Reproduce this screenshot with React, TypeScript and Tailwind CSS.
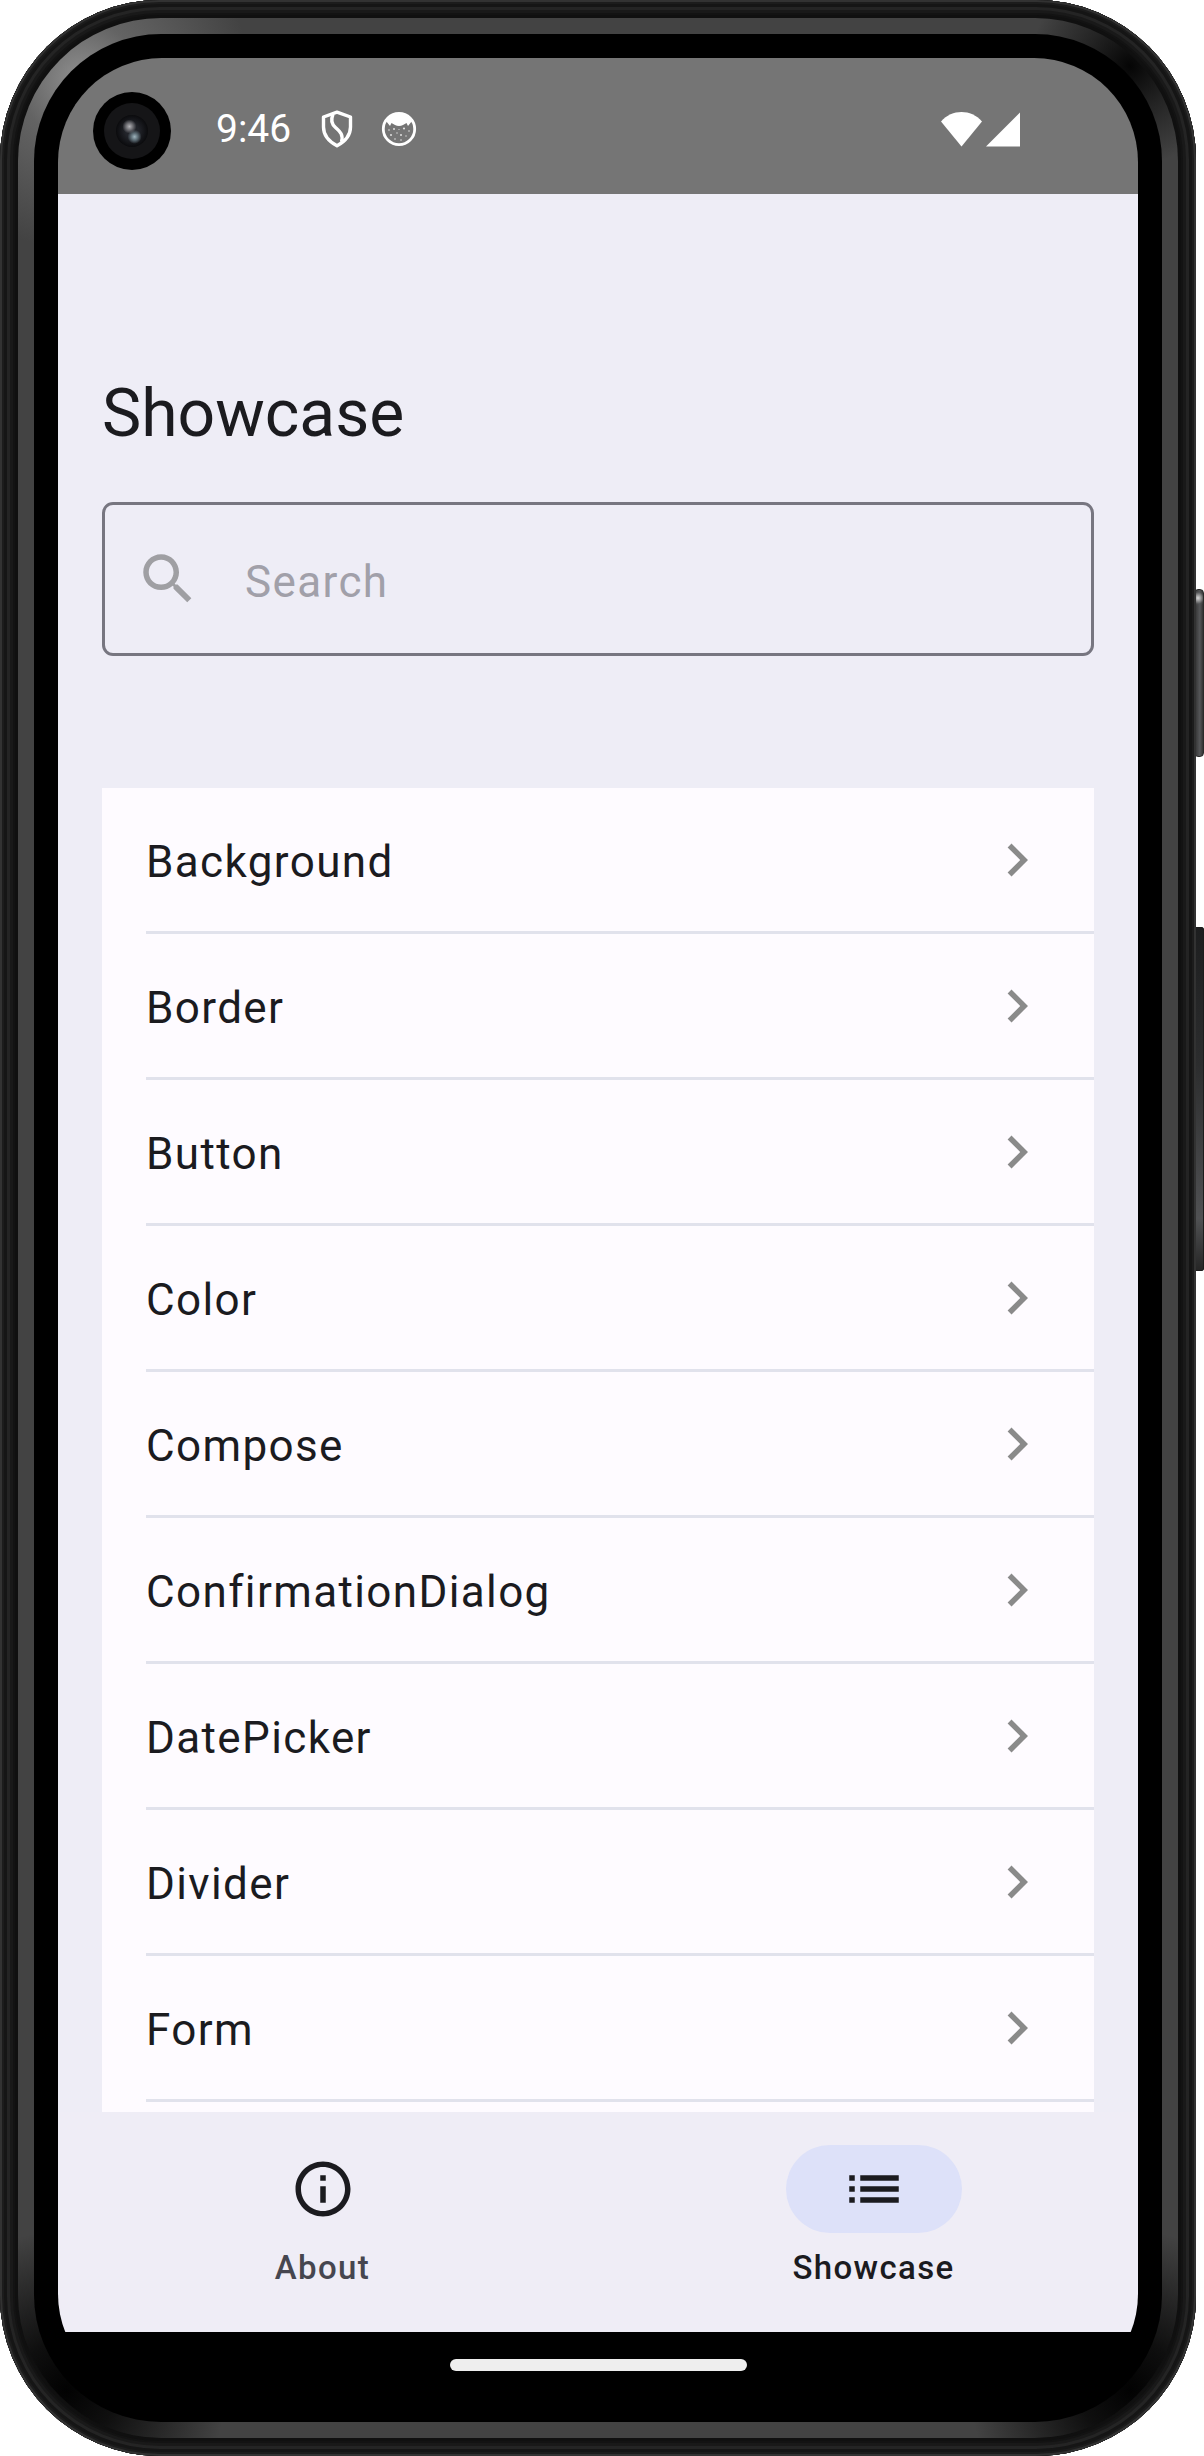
import React from "react";

const ITEMS = [
  "Background",
  "Border",
  "Button",
  "Color",
  "Compose",
  "ConfirmationDialog",
  "DatePicker",
  "Divider",
  "Form",
];

function Camera() {
  return (
    <div className="absolute left-[35px] top-[34px] flex h-[78px] w-[78px] items-center justify-center rounded-full bg-black">
      <div className="flex h-14 w-14 items-center justify-center rounded-full bg-[#151517]">
        <div className="h-8 w-8 rounded-full bg-[radial-gradient(circle_at_42%_36%,#b4b4b8_0px,#77777c_3px,transparent_7px),radial-gradient(circle_at_58%_68%,#9fb4bd_0px,#64757e_3px,transparent_7px),radial-gradient(circle,#22242a_30%,#08080a_75%)]" />
      </div>
    </div>
  );
}

function StatusBar() {
  return (
    <div className="relative flex h-[136px] shrink-0 items-center bg-[#757575] pt-[6px] text-white">
      <Camera />
      <span className="ml-[158px] w-[75px] whitespace-nowrap text-[39px] leading-[46px]">9:46</span>
      <svg className="ml-[30px] h-[38px] w-[32px]" viewBox="0 0 32 38" fill="none" stroke="white" strokeWidth="3.4" strokeLinejoin="round">
        <path d="M16 2.200 L29.500 7 V17 C29.500 25 24 31.500 16 35.800 C8 31.500 2.500 25 2.500 17 V7 Z" />
        <path d="M12 4.500 C9.500 10 10.500 14 14.500 17.500 C19.500 22 22.500 25 20.500 32" />
      </svg>
      <svg className="ml-[28px] h-[36px] w-[36px]" viewBox="0 0 36 36">
        <circle cx="18" cy="18" r="15.700" fill="none" stroke="white" strokeWidth="2.800" />
        <path d="M5 10 C9 4 13 2 18 2 C23 2 27 4 31 10 L27 15 L25.500 12 L22 14 C19.500 15.200 16.500 15.200 14 14 L10.500 12 L9 15 Z" fill="white" />
        <g fill="#e0e0e0">
          <circle cx="8" cy="19" r=".8" /><circle cx="13" cy="18" r="1" /><circle cx="23" cy="17.500" r="1.100" />
          <circle cx="28" cy="20" r=".8" /><circle cx="10" cy="24" r="1" /><circle cx="16" cy="22" r=".7" />
          <circle cx="20" cy="24" r="1" /><circle cx="25" cy="25" r=".7" /><circle cx="14" cy="28" r=".8" />
          <circle cx="20" cy="29" r=".8" /><circle cx="18" cy="18.500" r=".6" />
        </g>
      </svg>
      <svg className="ml-auto h-[35px] w-[41px]" viewBox="0 0 41 35" fill="white">
        <path d="M0 9.500 C11 -3.100 30 -3.100 41 9.500 L20.500 34.500 Z" />
      </svg>
      <svg className="ml-[4px] mr-[118px] h-[35px] w-[34px]" viewBox="0 0 34 35" fill="white">
        <path d="M34 0.500 V34.500 H0 Z" />
      </svg>
    </div>
  );
}

function SearchField() {
  return (
    <div className="mx-11 mt-[33px] flex h-[154px] shrink-0 items-center rounded-[11px] border-[3px] border-[#777680] pl-[30px]">
      <svg className="h-[66px] w-[66px]" viewBox="0 0 24 24" fill="#9f9fa3">
        <path d="M15.500 14h-.79l-.28-.27C15.410 12.590 16 11.110 16 9.500 16 5.910 13.090 3 9.500 3S3 5.910 3 9.500 5.910 16 9.500 16c1.610 0 3.090-.59 4.230-1.570l.27.28v.79l5 4.990L20.490 19l-4.990-5zm-6 0C7.010 14 5 11.990 5 9.500S7.010 5 9.500 5 14 7.010 14 9.500 11.990 14 9.500 14z" />
      </svg>
      <span className="ml-[44px] mt-[5px] text-[44px] leading-[66px] tracking-[1.375px] text-[#a1a0a9]">Search</span>
    </div>
  );
}

function Row({ label }: { label: string }) {
  return (
    <li className="ml-11 flex h-[146px] shrink-0 items-center justify-between border-b-[3px] border-[#e1e2ec] pr-11">
      <span className="mt-[4px] text-[44px] leading-[66px] tracking-[1.375px] text-[#1b1b1f]">{label}</span>
      <svg className="h-[66px] w-[66px]" viewBox="0 0 24 24" fill="#8a8a8a">
        <path d="M10 6L8.590 7.410 13.170 12l-4.580 4.590L10 18l6-6z" />
      </svg>
    </li>
  );
}

function NavItem({ label, active, path }: { label: string; active?: boolean; path: string }) {
  return (
    <div className="flex flex-1 flex-col items-center pt-[33px]">
      <div className={active ? "flex h-[88px] w-[176px] items-center justify-center rounded-full bg-[#dde1f9]" : "flex h-[88px] w-[176px] items-center justify-center"}>
        <svg className="h-[66px] w-[66px]" viewBox="0 0 24 24" fill="#1b1b1f">
          <path d={path} />
        </svg>
      </div>
      <span className={active ? "mt-[13px] text-[33px] font-medium leading-[44px] tracking-[1.375px] text-[#1b1b1f]" : "mt-[13px] text-[33px] font-medium leading-[44px] tracking-[1.375px] text-[#46464f]"}>
        {label}
      </span>
    </div>
  );
}

export default function App() {
  return (
    <div className="relative h-[2456px] w-[1204px] overflow-hidden bg-white font-['Roboto',sans-serif]">
      <div className="absolute left-[1194px] top-[589px] h-[168px] w-[10px] rounded-[4px] border border-[#2a2a2a] bg-[radial-gradient(circle_at_3px_8px,#d8d8d8_0px,#55565866_6px,transparent_8px),linear-gradient(90deg,#333,#555658_60%,#333)]" />
      <div className="absolute left-[1194px] top-[927px] h-[344px] w-[10px] rounded-[2px] border border-[#1c1c1c] bg-[linear-gradient(180deg,#1d1e1f,#2c2d2e_40%,#505153_85%,#262626)]" />
      <div className="relative h-[2456px] w-[1196px] rounded-[160px] bg-[#111] p-[18px] shadow-[inset_0_0_0_2px_#323232,inset_0_0_0_4px_#1c1c1c,inset_0_0_0_7px_#151515,inset_0_0_0_10px_#242424,inset_0_0_0_13px_#191919,inset_0_0_0_15px_#131313,inset_0_0_0_18px_#101010]">
        <div className="h-full rounded-[143px] bg-[radial-gradient(circle_at_62px_62px,#909090_0px,#80808088_60px,transparent_170px),radial-gradient(circle_at_1112px_48px,#050505_0px,#08080888_45px,transparent_100px),radial-gradient(circle_at_48px_2372px,#020202_0px,#020202cc_50px,transparent_160px),radial-gradient(circle_at_1112px_2372px,#020202_0px,#020202cc_50px,transparent_160px)] bg-[#434343] p-4">
          <div className="h-full rounded-[127px] bg-black p-6">
            <div className="flex h-[2340px] w-[1080px] flex-col overflow-hidden rounded-[104px] bg-black">
              <StatusBar />
              <main className="flex h-[1918px] shrink-0 flex-col bg-[#eeedf6]">
                <h1 className="ml-11 mt-[170px] shrink-0 pb-[5px] text-[66px] leading-[100px] text-[#1b1b1f]">Showcase</h1>
                <SearchField />
                <ul className="mx-11 mt-[132px] flex h-[1324px] shrink-0 flex-col bg-[#fefbff]">
                  {ITEMS.map((item) => (
                    <Row key={item} label={item} />
                  ))}
                </ul>
              </main>
              <nav className="flex h-[220px] shrink-0 gap-[22px] bg-[#efedf6]">
                <NavItem
                  label="About"
                  path="M11 7h2v2h-2zm0 4h2v6h-2zm1-9C6.480 2 2 6.480 2 12s4.480 10 10 10 10-4.480 10-10S17.520 2 12 2zm0 18c-4.410 0-8-3.590-8-8s3.590-8 8-8 8 3.590 8 8-3.590 8-8 8z"
                />
                <NavItem
                  label="Showcase"
                  active
                  path="M3 13h2v-2H3v2zm0 4h2v-2H3v2zm0-8h2V7H3v2zm4 4h14v-2H7v2zm0 4h14v-2H7v2zM7 7v2h14V7H7z"
                />
              </nav>
              <div className="flex h-[66px] shrink-0 items-center justify-center bg-black">
                <div className="h-3 w-[297px] rounded-full bg-[#eeeeee]" />
              </div>
            </div>
          </div>
        </div>
      </div>
    </div>
  );
}
